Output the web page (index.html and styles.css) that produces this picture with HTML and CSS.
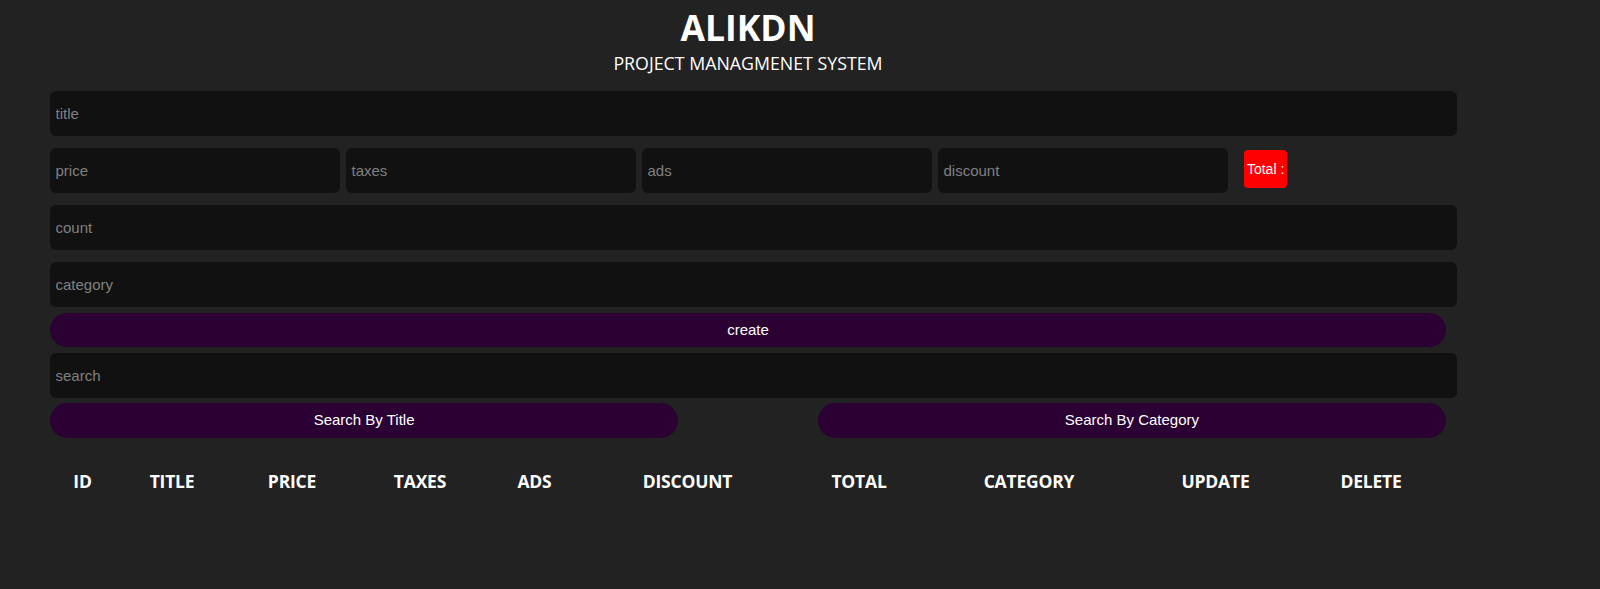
FILE: index.html
```html
<!DOCTYPE html>
<html lang="en">
<head>
<meta charset="utf-8">
<title>ALIKDN</title>
<link rel="stylesheet" href="styles.css">
</head>
<body>
<div class="app">
  <header class="head">
    <h1 class="brand">ALIKDN</h1>
    <p class="sub">PROJECT MANAGMENET SYSTEM</p>
  </header>
  <div class="form">
    <input class="field" type="text" placeholder="title">
    <div class="price-row">
      <input class="field small" type="number" placeholder="price">
      <input class="field small" type="number" placeholder="taxes">
      <input class="field small" type="number" placeholder="ads">
      <input class="field small" type="number" placeholder="discount">
      <small class="total">Total :</small>
    </div>
    <input class="field" type="number" placeholder="count">
    <input class="field" type="text" placeholder="category">
    <button class="btn create">create</button>
    <input class="field search" type="text" placeholder="search">
    <div class="search-btns">
      <button class="btn half">Search By Title</button>
      <button class="btn half">Search By Category</button>
    </div>
  </div>
  <table class="grid">
    <thead>
      <tr>
        <th class="c-id">ID</th>
        <th class="c-title">TITLE</th>
        <th class="c-price">PRICE</th>
        <th class="c-taxes">TAXES</th>
        <th class="c-ads">ADS</th>
        <th class="c-discount">DISCOUNT</th>
        <th class="c-total">TOTAL</th>
        <th class="c-category">CATEGORY</th>
        <th class="c-update">UPDATE</th>
        <th class="c-delete">DELETE</th>
      </tr>
    </thead>
    <tbody></tbody>
  </table>
</div>
</body>
</html>
```
FILE: styles.css
```css
html, body {
  margin: 0;
  padding: 0;
  background: #222222;
  height: 100%;
}

body {
  font-family: "Liberation Sans", Arial, sans-serif;
  color: #ffffff;
}

.app {
  width: 1396px;
  margin-left: 50px;
  padding-top: 7px;
}

.head {
  text-align: center;
}

.brand {
  margin: 0;
  font-family: "Open Sans", "Noto Sans", sans-serif;
  font-weight: 700;
  font-size: 35.5px;
  line-height: 40px;
  color: #ffffff;
}

.sub {
  margin: 5px 0 0;
  font-family: "Open Sans", "Noto Sans", sans-serif;
  font-weight: 400;
  font-size: 17.8px;
  line-height: 22px;
  color: #ffffff;
}

.form {
  margin-top: 17px;
  display: flex;
  flex-direction: column;
  align-items: flex-start;
}

.field {
  box-sizing: content-box;
  display: block;
  width: 100%;
  height: 45px;
  padding: 0 5.5px;
  margin: 0 0 12px;
  border: none;
  outline: none;
  border-radius: 6px;
  background: #111111;
  color: #ffffff;
  font-family: "Liberation Sans", Arial, sans-serif;
  font-size: 15px;
}

.field::placeholder {
  color: #808080;
}

.field::-webkit-outer-spin-button,
.field::-webkit-inner-spin-button {
  -webkit-appearance: none;
  margin: 0;
}

.field[type=number] {
  -moz-appearance: textfield;
}

.price-row {
  display: flex;
  align-items: flex-start;
  gap: 5.8px;
  width: 100%;
  margin-bottom: 12px;
}

.price-row .field {
  width: 20%;
  margin: 0;
  flex: none;
}

.total {
  margin: 2px 0 0 10px;
  height: 38px;
  padding: 0 3px;
  display: flex;
  align-items: center;
  background: #ff0000;
  color: #ffffff;
  border-radius: 4px;
  font-size: 14px;
}

.field + .create {
  margin-top: -6px;
}

.btn {
  display: block;
  height: 34px;
  padding: 0 6px 2px;
  border: none;
  border-radius: 18px;
  background: #2b0032;
  color: #ffffff;
  font-family: "Liberation Sans", Arial, sans-serif;
  font-size: 15px;
  cursor: pointer;
}

.create {
  width: 100%;
  margin-bottom: 6px;
}

.search {
  margin-bottom: 5px;
}

.search-btns {
  width: 100%;
  display: flex;
  justify-content: space-between;
}

.half {
  width: 45%;
  height: 35px;
}

.grid {
  margin-top: 30px;
  border-collapse: collapse;
  table-layout: fixed;
  width: 1392px;
}

.grid th {
  padding: 0;
  height: 26px;
  text-align: center;
  font-family: "Open Sans", "Noto Sans", sans-serif;
  font-weight: 700;
  font-size: 17.5px;
  letter-spacing: -0.2px;
  color: #ffffff;
}

.c-id { width: 65px; }
.c-title { width: 114px; }
.c-price { width: 126px; }
.c-taxes { width: 130px; }
.c-ads { width: 99px; }
.c-discount { width: 207px; }
.c-total { width: 136px; }
.c-category { width: 204px; }
.c-update { width: 169px; }
.c-delete { width: 142px; }
```
